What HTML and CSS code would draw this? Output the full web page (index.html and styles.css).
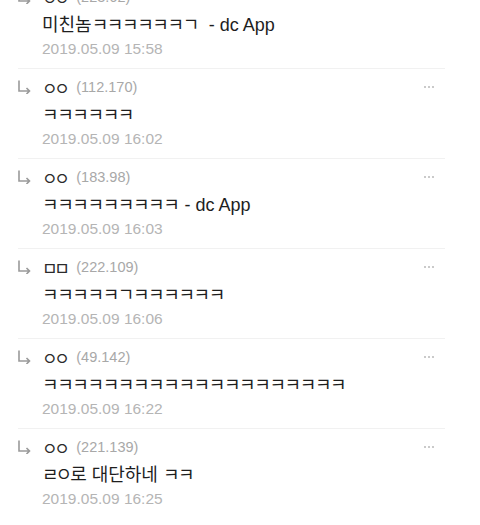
FILE: index.html
```html
<!DOCTYPE html>
<html lang="ko">
<head>
    <meta charset="UTF-8">
    <meta name="viewport" content="width=device-width, initial-scale=1.0">
    <title>댓글</title>
    <link rel="stylesheet" href="styles.css">
</head>
<body>
    <div class="thread">
        <div class="reply">
            <div class="reply-head">
                <svg class="arrow" width="14" height="14" viewBox="0 0 14 14"><path d="M2 0.5V11H12.5M9.5 8L12.5 11L9.5 14"/></svg>
                <span class="nick">ㅇㅇ</span>
                <span class="ip">(223.62)</span>
                <svg class="more" width="12" height="4" viewBox="0 0 12 4"><circle cx="2" cy="2" r="1"/><circle cx="6" cy="2" r="1"/><circle cx="10" cy="2" r="1"/></svg>
            </div>
            <p class="body">미친놈<span class="jamo">ㅋㅋㅋㅋㅋㅋㄱ</span>&nbsp; - dc App</p>
            <p class="date">2019.05.09 15:58</p>
        </div>
        <div class="reply">
            <div class="reply-head">
                <svg class="arrow" width="14" height="14" viewBox="0 0 14 14"><path d="M2 0.5V11H12.5M9.5 8L12.5 11L9.5 14"/></svg>
                <span class="nick">ㅇㅇ</span>
                <span class="ip">(112.170)</span>
                <svg class="more" width="12" height="4" viewBox="0 0 12 4"><circle cx="2" cy="2" r="1"/><circle cx="6" cy="2" r="1"/><circle cx="10" cy="2" r="1"/></svg>
            </div>
            <p class="body"><span class="jamo">ㅋㅋㅋㅋㅋㅋ</span></p>
            <p class="date">2019.05.09 16:02</p>
        </div>
        <div class="reply">
            <div class="reply-head">
                <svg class="arrow" width="14" height="14" viewBox="0 0 14 14"><path d="M2 0.5V11H12.5M9.5 8L12.5 11L9.5 14"/></svg>
                <span class="nick">ㅇㅇ</span>
                <span class="ip">(183.98)</span>
                <svg class="more" width="12" height="4" viewBox="0 0 12 4"><circle cx="2" cy="2" r="1"/><circle cx="6" cy="2" r="1"/><circle cx="10" cy="2" r="1"/></svg>
            </div>
            <p class="body"><span class="jamo">ㅋㅋㅋㅋㅋㅋㅋㅋㅋ</span> - dc App</p>
            <p class="date">2019.05.09 16:03</p>
        </div>
        <div class="reply">
            <div class="reply-head">
                <svg class="arrow" width="14" height="14" viewBox="0 0 14 14"><path d="M2 0.5V11H12.5M9.5 8L12.5 11L9.5 14"/></svg>
                <span class="nick">ㅁㅁ</span>
                <span class="ip">(222.109)</span>
                <svg class="more" width="12" height="4" viewBox="0 0 12 4"><circle cx="2" cy="2" r="1"/><circle cx="6" cy="2" r="1"/><circle cx="10" cy="2" r="1"/></svg>
            </div>
            <p class="body"><span class="jamo">ㅋㅋㅋㅋㅋㄱㅋㅋㅋㅋㅋㅋ</span></p>
            <p class="date">2019.05.09 16:06</p>
        </div>
        <div class="reply">
            <div class="reply-head">
                <svg class="arrow" width="14" height="14" viewBox="0 0 14 14"><path d="M2 0.5V11H12.5M9.5 8L12.5 11L9.5 14"/></svg>
                <span class="nick">ㅇㅇ</span>
                <span class="ip">(49.142)</span>
                <svg class="more" width="12" height="4" viewBox="0 0 12 4"><circle cx="2" cy="2" r="1"/><circle cx="6" cy="2" r="1"/><circle cx="10" cy="2" r="1"/></svg>
            </div>
            <p class="body"><span class="jamo">ㅋㅋㅋㅋㅋㅋㅋㅋㅋㅋㅋㅋㅋㅋㅋㅋㅋㅋㅋㅋ</span></p>
            <p class="date">2019.05.09 16:22</p>
        </div>
        <div class="reply">
            <div class="reply-head">
                <svg class="arrow" width="14" height="14" viewBox="0 0 14 14"><path d="M2 0.5V11H12.5M9.5 8L12.5 11L9.5 14"/></svg>
                <span class="nick">ㅇㅇ</span>
                <span class="ip">(221.139)</span>
                <svg class="more" width="12" height="4" viewBox="0 0 12 4"><circle cx="2" cy="2" r="1"/><circle cx="6" cy="2" r="1"/><circle cx="10" cy="2" r="1"/></svg>
            </div>
            <p class="body"><span class="jamo tight">ㄹㅇ</span>로 대단하네 <span class="jamo">ㅋㅋ</span></p>
            <p class="date">2019.05.09 16:25</p>
        </div>
    </div>
</body>
</html>
```

FILE: styles.css
```css
body {
    margin: 0;
    padding: 0;
    background: #fff;
    font-family: "Liberation Sans", "Noto Sans CJK KR", sans-serif;
    overflow: hidden;
}
.thread {
    margin-top: -22px;
}
.reply {
    margin: 0 35px 0 18px;
    padding: 5px 0 6px 24px;
    border-top: 1px solid #f1f1f1;
}
.reply-head {
    display: flex;
    align-items: center;
    height: 26px;
}
.arrow {
    margin-left: -25px;
    margin-right: 11px;
    fill: none;
    stroke: #9a9a9a;
    stroke-width: 1.6;
}
.nick {
    font-family: "Noto Sans CJK KR", sans-serif;
    font-size: 17px;
    color: #2b2b2b;
    letter-spacing: -3.5px;
    margin-right: 10px;
}
.ip {
    font-size: 14.5px;
    color: #a8a8a8;
}
.more {
    margin-left: auto;
    margin-right: 10px;
    fill: #b8b8b8;
}
.body {
    margin: 0;
    height: 26px;
    line-height: 26px;
    font-family: "Liberation Sans", "Noto Sans CJK KR", sans-serif;
    font-size: 18px;
    color: #1e1e1e;
    white-space: nowrap;
}
.jamo {
    font-family: "Noto Sans CJK KR", sans-serif;
    letter-spacing: -1.4px;
    margin-right: 1px;
}
.tight {
    letter-spacing: -3px;
}
.date {
    margin: 0;
    height: 26px;
    line-height: 26px;
    font-size: 15.5px;
    color: #b5b5b5;
}
```
